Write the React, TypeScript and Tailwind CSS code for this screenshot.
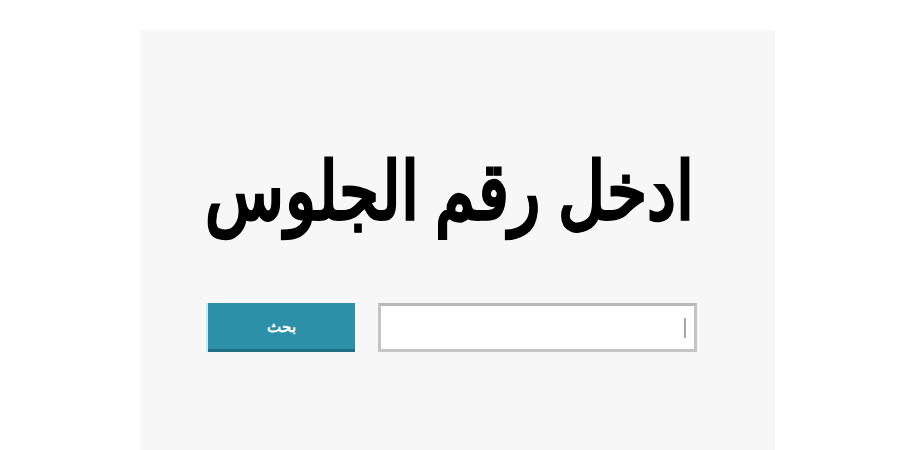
export default function App() {
  return (
    <div className="w-[900px] h-[450px] bg-white overflow-hidden flex">
      <div className="ml-[140px] mt-[30px] w-[635px] h-[420px] bg-[#f7f7f7] flex flex-col">
        <div className="mt-[108px] h-[100px] flex justify-end pr-[81px]">
          <div
            dir="rtl"
            className="whitespace-nowrap text-black font-bold text-[80px] leading-[100px] origin-right scale-x-[0.81] [-webkit-text-stroke:1px_black]"
            style={{ fontFamily: '"Noto Sans", sans-serif' }}
          >
            ادخل رقم الجلوس
          </div>
        </div>
        <div className="mt-[65px] ml-[68px] flex items-start gap-[23px]">
          <button
            className="w-[147px] h-[49px] bg-[#2c90a9] border-b-[3px] border-[#1f6f85] text-white text-[15px] font-bold flex items-center justify-center shadow-[-2px_0_0_#bfeefa]"
            style={{ fontFamily: '"Noto Sans", sans-serif' }}
          >
            بحث
          </button>
          <div className="w-[319px] h-[49px] bg-white border-[3px] border-[#c4c4c4] border-t-[#b8b8b8] flex items-center justify-end pr-[8px]">
            <div className="w-[2px] h-[20px] bg-[#a8a8a8]" />
          </div>
        </div>
      </div>
    </div>
  );
}
